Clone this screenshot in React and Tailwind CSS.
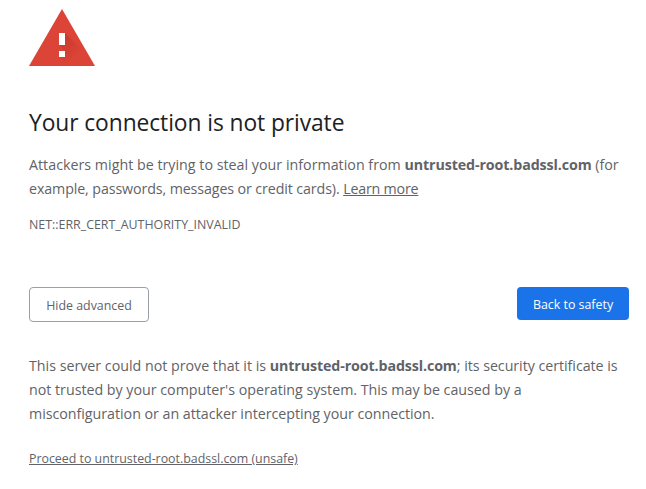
function WarningIcon() {
  return (
    <svg className="block h-[57px] w-[66px]" viewBox="0 0 66 57" aria-hidden="true">
      <defs>
        <linearGradient id="shade" gradientUnits="userSpaceOnUse" x1="33" y1="30" x2="49" y2="46">
          <stop offset="0" stopColor="#a52714" stopOpacity="0.34" />
          <stop offset="1" stopColor="#a52714" stopOpacity="0" />
        </linearGradient>
      </defs>
      <path d="M33 0 66 57H0Z" fill="#db4437" />
      <path d="M36 24 57 45 63 57H39L30 48 36 42 30 36Z" fill="url(#shade)" />
      <path d="M30 24h6v12h-6zM30 42h6v6h-6z" fill="#fff" />
    </svg>
  );
}

export default function App() {
  return (
    <main className="min-h-[489px] bg-white pt-[9px] pl-[29px] font-['Open_Sans','Noto_Sans',sans-serif] text-[14.25px] leading-6 whitespace-nowrap text-[#5f6368]">
      <div className="w-[600px]">
        <WarningIcon />
        <h1 className="mt-[43px] text-[22.8px] leading-7 tracking-[-0.08px] text-[#202124]">
          Your connection is not private
        </h1>
        <div className="mt-[16px]">
          <p>
            <span className="tracking-[0.012px]">
              Attackers might be trying to steal your information from{' '}
            </span>
            <strong className="font-bold tracking-[-0.11px]">untrusted-root.badssl.com</strong> (for
          </p>
          <p>
            <span className="tracking-[-0.11px]">
              example, passwords, messages or credit cards).{' '}
            </span>
            <a href="#learn" className="tracking-[-0.2px] underline">Learn more</a>
          </p>
        </div>
        <p className="mt-[15px] text-[12.4px] leading-[18px]">NET::ERR_CERT_AUTHORITY_INVALID</p>
        <div className="mt-[53px] flex items-start justify-between">
          <button className="h-[35px] w-[120px] rounded-[4px] border border-[#9aa0a6] pt-[3px] text-[12.4px] leading-4">
            Hide advanced
          </button>
          <button className="h-[33px] w-[112px] rounded-[4px] bg-[#1a73e8] pt-[3px] text-[12.4px] leading-4 text-white">
            Back to safety
          </button>
        </div>
        <div className="mt-[32px]">
          <p>
            <span className="tracking-[-0.01px]">This server could not prove that it is </span>
            <strong className="font-bold tracking-[-0.11px]">untrusted-root.badssl.com</strong>
            <span className="tracking-[-0.04px]">; its security certificate is</span>
          </p>
          <p className="tracking-[-0.015px]">
            not trusted by your computer's operating system. This may be caused by a
          </p>
          <p className="tracking-[-0.03px]">
            misconfiguration or an attacker intercepting your connection.
          </p>
        </div>
        <a href="#proceed" className="mt-[24px] block text-[12.4px] leading-[18px] tracking-[-0.01px] underline">
          Proceed to untrusted-root.badssl.com (unsafe)
        </a>
      </div>
    </main>
  );
}
